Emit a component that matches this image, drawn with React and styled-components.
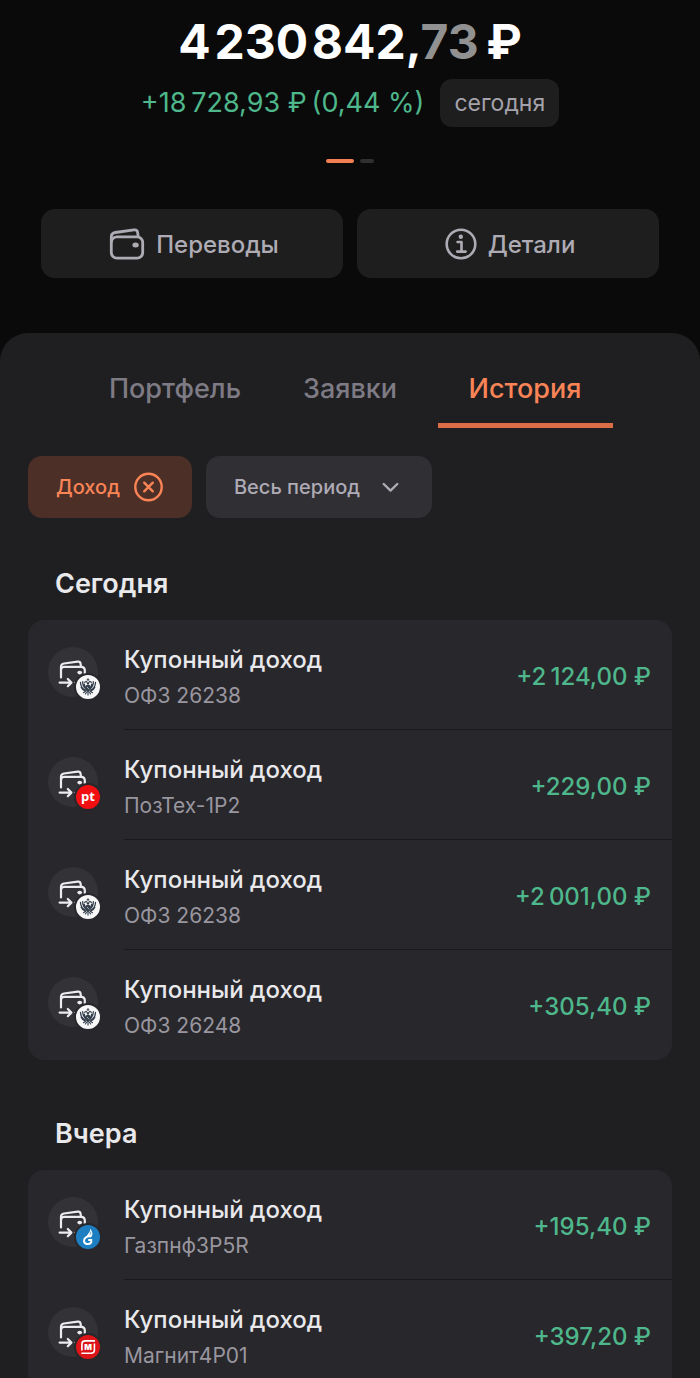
import styled, { createGlobalStyle } from "styled-components";

const GlobalStyle = createGlobalStyle`
* {
    box-sizing: border-box;
}
body {
    margin: 0;
    background-color: #0a0a0a;
    font-family: Inter, "Noto Sans", sans-serif;
    color: #e9e9ec;
}
button {
    border: none;
    font-family: inherit;
    cursor: pointer;
}
`

const Page = styled.div`
    height: 100vh;
    overflow: hidden;
    display: flex;
    flex-direction: column;
`

const Summary = styled.header`
    display: flex;
    flex-direction: column;
    align-items: center;
    padding: 12px 41px 55px;
`

const Balance = styled.h1`
    margin: 0;
    font-size: 48px;
    line-height: 60px;
    font-weight: 700;
    color: #ffffff;
    white-space: nowrap;
    span {
        color: #919191;
    }
`

const ChangeRow = styled.div`
    display: flex;
    align-items: center;
    gap: 16px;
    margin-top: 7px;
`

const Change = styled.span`
    font-size: 27px;
    line-height: 36px;
    color: #4eb78b;
    white-space: nowrap;
`

const PeriodButton = styled.button`
    height: 48px;
    padding: 0 14px;
    border-radius: 12px;
    background-color: #1e1e1e;
    color: #a5a2ab;
    font-size: 23px;
`

const Pager = styled.div`
    display: flex;
    gap: 6px;
    margin-top: 32px;
`

const PagerDot = styled.span`
    width: ${({ $active }) => ($active ? "28px" : "14px")};
    height: 4px;
    border-radius: 2px;
    background-color: ${({ $active }) => ($active ? "#f28055" : "#303030")};
`

const Actions = styled.div`
    align-self: stretch;
    display: grid;
    grid-template-columns: 1fr 1fr;
    gap: 14px;
    margin-top: 46px;
`

const ActionButton = styled.button`
    display: flex;
    align-items: center;
    justify-content: center;
    gap: 11px;
    height: 69px;
    padding: 1px 0 0 4px;
    border-radius: 14px;
    background-color: #1e1e1e;
    color: #aeabb4;
    font-size: 24px;
    font-weight: 500;
`

const Sheet = styled.main`
    flex: 1 0 auto;
    padding: 0 28px 28px;
    border-radius: 28px 28px 0 0;
    background-color: #1f1f21;
`

const Tabs = styled.nav`
    display: grid;
    grid-template-columns: repeat(3, 1fr);
    margin: 0 auto;
    max-width: 525px;
`

const Tab = styled.button`
    height: 95px;
    padding: 20px 0 0;
    border-bottom: 5px solid ${({ $active }) => ($active ? "#db6e46" : "transparent")};
    background: none;
    color: ${({ $active }) => ($active ? "#fb8457" : "#7e7b85")};
    font-size: 27px;
    font-weight: 500;
`

const Filters = styled.div`
    display: flex;
    gap: 14px;
    margin-top: 28px;
`

const Chip = styled.button`
    display: flex;
    align-items: center;
    gap: 14px;
    height: 62px;
    padding: 0 28px;
    border-radius: 14px;
    background-color: ${({ $active }) => ($active ? "#4c2f27" : "#302f34")};
    color: ${({ $active }) => ($active ? "#fb8457" : "#aeabb4")};
    font-size: 20px;
    line-height: 28px;
    font-weight: 500;
`

const Day = styled.section`
    margin-top: 48px;
    & + & {
        margin-top: 56px;
    }
`

const DayTitle = styled.h2`
    margin: 0 0 18px;
    padding: 0 27px;
    font-size: 27px;
    line-height: 36px;
    font-weight: 600;
`

const Operations = styled.ul`
    margin: 0;
    padding: 0;
    list-style: none;
    border-radius: 16px;
    background-color: #28272c;
`

const Operation = styled.li`
    display: flex;
    align-items: stretch;
    gap: 26px;
    padding-left: 20px;
    height: 110px;
`

const Avatar = styled.div`
    position: relative;
    width: 50px;
    height: 50px;
    margin-top: 27px;
    border-radius: 50%;
    background-color: #333237;
`

const Badge = styled.div`
    position: absolute;
    right: -4px;
    bottom: -4px;
    width: 28px;
    height: 28px;
    border: 2px solid #28272c;
    border-radius: 50%;
    background-color: ${({ $color }) => $color};
    svg {
        display: block;
    }
`

const OperationBody = styled.div`
    flex: 1;
    display: flex;
    align-items: center;
    justify-content: space-between;
    padding: 3px 21px 0 0;
    border-bottom: 1px solid #1a1a1c;
    ${Operation}:last-child & {
        border-bottom-color: transparent;
    }
`

const Labels = styled.div`
    padding-top: 4px;
`

const Name = styled.div`
    font-size: 24px;
    line-height: 36px;
    font-weight: 500;
`

const Paper = styled.div`
    font-size: 21px;
    line-height: 36px;
    color: #99969f;
`

const Amount = styled.div`
    font-size: 24px;
    font-weight: 500;
    color: #4eb78b;
    white-space: nowrap;
`

const WalletIcon = () => (
    <svg width="36" height="32" viewBox="0 0 36 32" fill="none" stroke="currentColor" strokeWidth="2.8" strokeLinejoin="round" aria-hidden="true">
        <rect x="2.3" y="8.8" width="31.4" height="21.4" rx="5.600" />
        <path d="M2.3 14.500V9c0-2.600 1.400-4.100 3.900-4.500L25 1.900c2-.3 3.300.6 3.600 2.500l.7 4.600" />
        <ellipse cx="26.600" cy="17" rx="3.200" ry="2.500" fill="currentColor" stroke="none" />
    </svg>
)

const InfoIcon = () => (
    <svg width="32" height="32" viewBox="0 0 32 32" fill="none" stroke="currentColor" strokeWidth="2.6" aria-hidden="true">
        <circle cx="16" cy="16" r="14.3" />
        <circle cx="15.800" cy="8.700" r="2.200" fill="currentColor" stroke="none" />
        <path d="M12.600 14h3.900v9.400M12.200 23.600h8.400" strokeLinecap="round" strokeLinejoin="round" />
    </svg>
)

const ClearIcon = () => (
    <svg width="30" height="30" viewBox="0 0 30 30" fill="none" stroke="currentColor" strokeWidth="2.4" strokeLinecap="round" aria-hidden="true">
        <circle cx="14.500" cy="15" r="13.200" />
        <path d="M10.200 10.700l8.600 8.600M18.800 10.700l-8.600 8.600" />
    </svg>
)

const ChevronIcon = () => (
    <svg width="30" height="30" viewBox="0 0 30 30" fill="none" stroke="currentColor" strokeWidth="2.4" strokeLinecap="round" strokeLinejoin="round" aria-hidden="true">
        <path d="M9.700 12l6.800 6.600 6.800-6.600" />
    </svg>
)

const IncomeIcon = () => (
    <svg width="50" height="50" viewBox="0 0 50 50" fill="none" stroke="#ececef" strokeWidth="2.200" strokeLinecap="round" strokeLinejoin="round" aria-hidden="true">
        <path d="M13 30.500V19.800c0-1.900 1-3 2.900-3.300l13.800-1.900c1.700-.2 2.700.5 2.900 2.200l.4 3" />
        <path d="M13.200 22c.4-1.400 1.400-2.100 3-2.100h16.900c2.400 0 3.700 1.300 3.700 3.700V29" />
        <ellipse cx="31.700" cy="25.600" rx="2.400" ry="1.800" fill="#ececef" stroke="none" />
        <path d="M11.600 35.600h11M19.800 32l3.600 3.600-3.600 3.600" />
        <circle cx="26.800" cy="35.400" r=".6" fill="#ececef" stroke="none" />
    </svg>
)

const EagleLogo = () => (
    <svg width="24" height="24" viewBox="0 0 24 24" fill="none" stroke="#333e4b" strokeLinecap="round" aria-hidden="true">
        <path d="M4.500 7.500c.2 4 1.900 6.400 5 7.600M6.700 6.700c-.1 3 1 5.500 3.300 7M8.300 9.200c.1 1.500.8 2.700 1.900 3.500M5.200 12.300c.8 1.900 2 3 3.900 3.700" strokeWidth="1.300" />
        <path d="M19.500 7.500c-.2 4-1.900 6.400-5 7.600M17.300 6.700c.1 3-1 5.500-3.300 7M15.700 9.200c-.1 1.500-.8 2.700-1.900 3.500M18.800 12.300c-.8 1.900-2 3-3.900 3.700" strokeWidth="1.300" />
        <path d="M8.600 7.300l1.700-.8c1 .4 1.300 1.200 1.200 2.500M15.400 7.300l-1.700-.8c-1 .4-1.300 1.200-1.200 2.500" strokeWidth="1.200" />
        <path d="M12 3.600v1.800M11.100 4.800h1.800" strokeWidth="1" />
        <path d="M9.800 10.500c1.400-1 3-1 4.400 0v3.700c0 1.300-1 2.300-2.200 2.900-1.200-.6-2.200-1.600-2.200-2.900z" fill="#333e4b" stroke="none" />
        <path d="M12 16.500v3.600M10.700 17l-1.300 2M13.300 17l1.300 2M9.500 16.300l-2 1.400M14.500 16.300l2 1.400" strokeWidth="1.100" />
        <path d="M11.200 12.200l1.600 1.800" stroke="#ffffff" strokeWidth=".6" />
    </svg>
)

const PtLogo = () => (
    <svg width="24" height="24" viewBox="0 0 24 24" aria-hidden="true">
        <text x="12" y="16" textAnchor="middle" fontFamily="Open Sans, sans-serif" fontSize="13" fontWeight="700" fill="#ffffff">pt</text>
    </svg>
)

const FlameLogo = () => (
    <svg width="24" height="24" viewBox="0 0 24 24" fill="none" aria-hidden="true">
        <path d="M15.300 11.600c-3.700-1-7.300 1-7.300 4.200 0 3.500 5 4.500 7.200 1.500v-2.200h-3" stroke="#ffffff" strokeWidth="2" />
        <path d="M11 11.800c-.3-2.900 3.600-3.700 3-8 2.600 2.500 3.200 5.400 1.600 7.800-1.200-1-3-1-4.600.2z" fill="#ffffff" />
        <path d="M13.800 9.700c.9-1 1.100-1.900.9-3" stroke="#1d7fc1" strokeWidth=".8" />
    </svg>
)

const MagnitLogo = () => (
    <svg width="24" height="24" viewBox="0 0 24 24" fill="none" stroke="#ffffff" strokeWidth="1.600" aria-hidden="true">
        <path d="M19 5.900H9.300C7 5.900 5.900 7 5.900 9.200v6.400" />
        <path d="M5.400 18.200h9.500c2.300 0 3.500-1.100 3.500-3.300V8.500" />
        <text x="12.200" y="14.800" textAnchor="middle" fontFamily="Inter, sans-serif" fontSize="8" fontWeight="900" fill="#ffffff" stroke="none">M</text>
    </svg>
)

const issuers = {
    ofz: { color: "#f7f7f8", Logo: EagleLogo },
    pt: { color: "#f10f12", Logo: PtLogo },
    gazprom: { color: "#1d7fc1", Logo: FlameLogo },
    magnit: { color: "#dd1518", Logo: MagnitLogo },
}

const days = [
    {
        title: "Сегодня",
        items: [
            { issuer: "ofz", paper: "ОФЗ 26238", amount: "+2\u2009124,00 ₽" },
            { issuer: "pt", paper: "ПозТех-1P2", amount: "+229,00 ₽" },
            { issuer: "ofz", paper: "ОФЗ 26238", amount: "+2\u2009001,00 ₽" },
            { issuer: "ofz", paper: "ОФЗ 26248", amount: "+305,40 ₽" },
        ],
    },
    {
        title: "Вчера",
        items: [
            { issuer: "gazprom", paper: "Газпнф3P5R", amount: "+195,40 ₽" },
            { issuer: "magnit", paper: "Магнит4P01", amount: "+397,20 ₽" },
        ],
    },
]

const tabs = ["Портфель", "Заявки", "История"]

const OperationRow = ({ issuer, paper, amount }) => {
    const { color, Logo } = issuers[issuer]
    return (
        <Operation>
            <Avatar>
                <IncomeIcon />
                <Badge $color={color}>
                    <Logo />
                </Badge>
            </Avatar>
            <OperationBody>
                <Labels>
                    <Name>Купонный доход</Name>
                    <Paper>{paper}</Paper>
                </Labels>
                <Amount>{amount}</Amount>
            </OperationBody>
        </Operation>
    )
}

const App = () => {
    return (
        <>
            <GlobalStyle />
            <Page>
                <Summary>
                    <Balance>4{"\u200A"}230{"\u200A"}842,<span>73</span>{"\u2009"}₽</Balance>
                    <ChangeRow>
                        <Change>+18{"\u2009"}728,93 ₽{"\u2009"}(0,44 %)</Change>
                        <PeriodButton type="button">сегодня</PeriodButton>
                    </ChangeRow>
                    <Pager>
                        <PagerDot $active />
                        <PagerDot />
                    </Pager>
                    <Actions>
                        <ActionButton type="button"><WalletIcon />Переводы</ActionButton>
                        <ActionButton type="button"><InfoIcon />Детали</ActionButton>
                    </Actions>
                </Summary>
                <Sheet>
                    <Tabs>
                        {tabs.map((tab) => (
                            <Tab key={tab} type="button" $active={tab === "История"}>{tab}</Tab>
                        ))}
                    </Tabs>
                    <Filters>
                        <Chip type="button" $active>Доход<ClearIcon /></Chip>
                        <Chip type="button">Весь период<ChevronIcon /></Chip>
                    </Filters>
                    {days.map((day) => (
                        <Day key={day.title}>
                            <DayTitle>{day.title}</DayTitle>
                            <Operations>
                                {day.items.map((item, i) => (
                                    <OperationRow key={i} {...item} />
                                ))}
                            </Operations>
                        </Day>
                    ))}
                </Sheet>
            </Page>
        </>
    )
}

export default App;
